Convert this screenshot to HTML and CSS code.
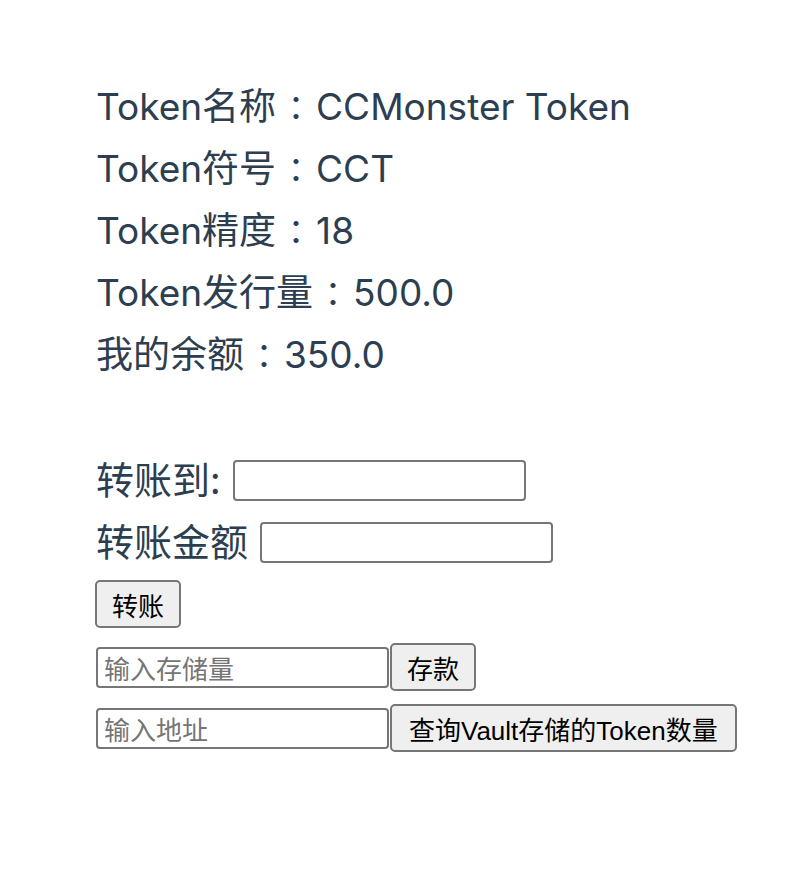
FILE: index.html
```html
<!DOCTYPE html>
<html lang="zh-CN">
<head>
<meta charset="utf-8">
<title>Token</title>
<link rel="stylesheet" href="styles.css">
</head>
<body>
<div class="app">
  <div class="info">
    <div class="line">Token名称<span class="colon">：</span>CCMonster Token</div>
    <div class="line">Token符号<span class="colon">：</span>CCT</div>
    <div class="line">Token精度<span class="colon">：</span>18</div>
    <div class="line">Token发行量<span class="colon">：</span>500.0</div>
    <div class="line">我的余额<span class="colon">：</span>350.0</div>
  </div>
  <div class="transfer">
    <div class="field"><span class="label">转账到:</span><input class="text-input" type="text"></div>
    <div class="field"><span class="label">转账金额</span><input class="text-input" type="text"></div>
    <div class="btn-row"><button class="btn">转账</button></div>
  </div>
  <div class="action-row first"><input class="text-input" type="text" placeholder="输入存储量"><button class="btn">存款</button></div>
  <div class="action-row"><input class="text-input" type="text" placeholder="输入地址"><button class="btn wide">查询Vault存储的Token数量</button></div>
</div>
</body>
</html>
```
FILE: styles.css
```css
* { box-sizing: border-box; }
body {
  margin: 0;
  background: #ffffff;
  font-family: "Inter", "Noto Sans CJK SC", sans-serif;
  color: #2c3e50;
}
.app {
  padding: 75px 0 0 96px;
}
.line {
  font-size: 37px;
  height: 62px;
  line-height: 62px;
  white-space: nowrap;
}
.colon {
  font-family: "Noto Sans CJK TC", sans-serif;
  font-size: 33px;
  display: inline-block;
  width: 40px;
  text-align: center;
}
.transfer {
  margin-top: 64px;
}
.field {
  display: flex;
  align-items: center;
  height: 62px;
}
.label {
  font-family: "Noto Sans CJK SC", sans-serif;
  font-size: 38px;
  margin-right: 12px;
  position: relative;
  top: -3px;
}
.text-input {
  width: 293px;
  height: 41px;
  border: 2px solid #767676;
  border-radius: 4px;
  padding: 2px 6px;
  font-family: "Noto Sans CJK SC", sans-serif;
  font-size: 26px;
  color: #000;
  background: #fff;
  margin: 0;
}
.text-input::placeholder {
  color: #757575;
}
.btn {
  height: 48px;
  border: 2px solid #767676;
  border-radius: 5px;
  background: #efefef;
  font-family: "Liberation Sans", "Noto Sans CJK SC", sans-serif;
  font-size: 26px;
  color: #000;
  padding: 0 15px;
  margin: 0;
}
.btn-row {
  margin-top: 7px;
  margin-left: -1px;
}
.action-row {
  display: flex;
  align-items: center;
  height: 48px;
  margin-top: 13px;
}
.action-row.first {
  margin-top: 15px;
}
.action-row .btn {
  margin-left: 1px;
  padding: 0 15px;
}
.action-row .btn.wide {
  padding: 0 17px;
}
```
